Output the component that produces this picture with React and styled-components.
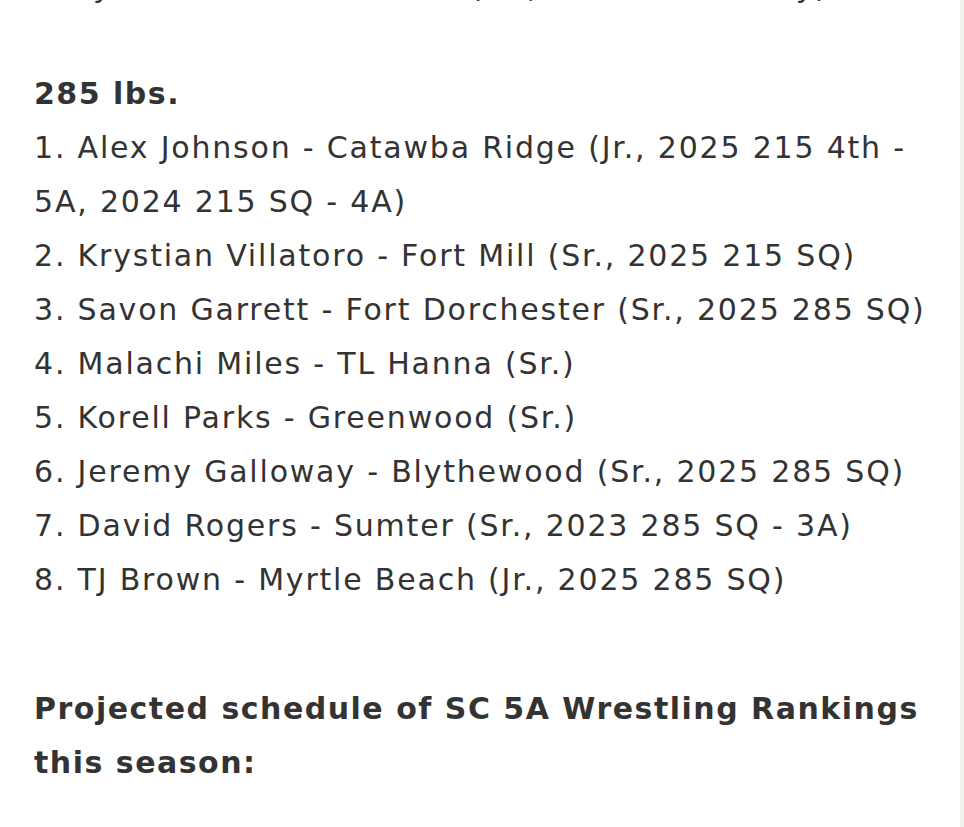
import React from 'react'
import styled, { createGlobalStyle } from 'styled-components'

const GlobalStyle = createGlobalStyle`
  html, body {
    margin: 0;
    background: #fff;
  }
`

const Page = styled.div`
  box-sizing: border-box;
  width: 964px;
  height: 827px;
  overflow: hidden;
  border-right: 4px solid #f1f0eb;
  padding: 0 12px 0 34px;
  color: #333;
  font-family: 'DejaVu Sans', Verdana, sans-serif;
  font-size: 30px;
  letter-spacing: 1.8px;
  line-height: 54px;
`

const Paragraph = styled.p`
  margin: 0;
  ${(p) => p.clipped && 'margin-top: -40px; margin-bottom: 53px;'}
  ${(p) => p.spaced && 'margin-top: 75px;'}
`

const Heading = styled.strong`
  font-weight: 700;
  letter-spacing: 1.5px;
`

const Ranking = styled.span`
  display: block;
`

const rankings = [
  'Alex Johnson - Catawba Ridge (Jr., 2025 215 4th - 5A, 2024 215 SQ - 4A)',
  'Krystian Villatoro - Fort Mill (Sr., 2025 215 SQ)',
  'Savon Garrett - Fort Dorchester (Sr., 2025 285 SQ)',
  'Malachi Miles - TL Hanna (Sr.)',
  'Korell Parks - Greenwood (Sr.)',
  'Jeremy Galloway - Blythewood (Sr., 2025 285 SQ)',
  'David Rogers - Sumter (Sr., 2023 285 SQ - 3A)',
  'TJ Brown - Myrtle Beach (Jr., 2025 285 SQ)'
]

export default function App() {
  return (
    <>
      <GlobalStyle />
      <Page>
        <Paragraph clipped>8. Tyler Hudson - Dorman (Sr., 2025 215 Tabby)</Paragraph>
        <Paragraph>
          <Heading>285 lbs.</Heading>
          {rankings.map((name, i) => (
            <Ranking key={name}>
              {i + 1}. {name}
            </Ranking>
          ))}
        </Paragraph>
        <Paragraph spaced>
          <Heading>Projected schedule of SC 5A Wrestling Rankings this season:</Heading>
        </Paragraph>
      </Page>
    </>
  )
}
